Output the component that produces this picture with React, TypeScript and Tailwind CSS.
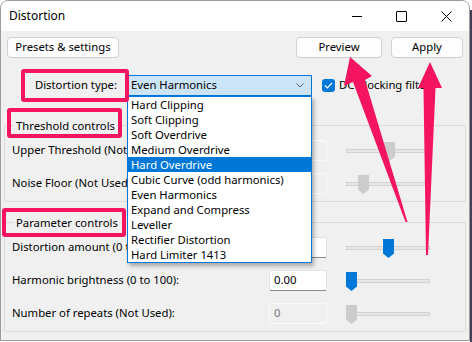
import React from 'react';

const options = [
  'Hard Clipping',
  'Soft Clipping',
  'Soft Overdrive',
  'Medium Overdrive',
  'Hard Overdrive',
  'Cubic Curve (odd harmonics)',
  'Even Harmonics',
  'Expand and Compress',
  'Leveller',
  'Rectifier Distortion',
  'Hard Limiter 1413',
];

const Slider: React.FC<{ pos: number; active?: boolean }> = ({ pos, active }) => (
  <div className="relative w-[84px] h-[21px] ml-[19px]">
    <div className="absolute left-0 right-0 top-[9px] h-[4px] bg-[#e6e6e6] border border-[#d2d2d2]" />
    <svg className="absolute top-[2px]" style={{ left: pos }} width="11" height="19" viewBox="0 0 11 19">
      <path d="M0 0H11V14.5L5.5 19L0 14.5Z" fill={active ? '#0078d7' : '#cccccc'} />
    </svg>
  </div>
);

const Row: React.FC<{ label: string; value?: string; enabled?: boolean; pos: number; first?: boolean }> = ({
  label,
  value = '',
  enabled,
  pos,
  first,
}) => (
  <div className={`flex items-center h-[21px] pl-[7px] ${first ? '' : 'mt-[12px]'}`}>
    <div className="w-[257px] whitespace-nowrap overflow-hidden">{label}</div>
    <div
      className={`w-[58px] h-[21px] flex items-center px-[4px] rounded-[2px] border ${
        enabled
          ? 'bg-white border-[#e3e3e3] border-b-[#8a8a8a] text-black'
          : 'bg-[#f0f0f0] border-[#fbfbfb] text-[#7a7a7a]'
      }`}
    >
      {value}
    </div>
    <Slider pos={pos} active={enabled} />
  </div>
);

const Group: React.FC<{ title: string; children: React.ReactNode; className?: string }> = ({ title, children, className }) => (
  <fieldset className={`mx-[3px] w-[462px] border border-[#dcdcdc] rounded-[2px] pb-[7px] ${className ?? ''}`}>
    <legend className="ml-[9px] px-[2px] leading-[16px] pt-[2px]">{title}</legend>
    <div className="pt-[6px]">{children}</div>
  </fieldset>
);

export default function App() {
  return (
    <div className="w-[472px] h-[342px] bg-white relative overflow-hidden text-[11.3px] text-black font-['Noto_Sans','Segoe_UI',sans-serif]">
      {/* desktop strip to the right of the window */}
      <div className="absolute right-0 top-[10px] bottom-0 w-[2px] bg-[#3f4257]" />
      <div className="w-[470px] h-[341px] bg-[#f0f0f0] border border-[#9c9c9c] rounded-t-[8px] overflow-hidden flex flex-col">
        {/* title bar */}
        <div className="h-[30px] bg-white flex items-center shrink-0 text-[12px]">
          <span className="ml-[8px] flex-1">Distortion</span>
          <div className="w-[45px] h-full flex items-center justify-center">
            <div className="w-[10px] h-px bg-black" />
          </div>
          <div className="w-[45px] h-full flex items-center justify-center">
            <div className="w-[11px] h-[11px] border border-black rounded-[1px]" />
          </div>
          <div className="w-[45px] h-full flex items-center justify-center">
            <svg width="11" height="11" viewBox="0 0 11 11">
              <path d="M0.5 0.5L10.5 10.5M10.5 0.5L0.5 10.5" stroke="#000" strokeWidth="1" />
            </svg>
          </div>
        </div>

        {/* buttons */}
        <div className="flex mt-[6px] px-[6px] h-[21px]">
          <button className="w-[112px] h-[21px] bg-[#fdfdfd] border border-[#d0d0d0] rounded-[4px]">Presets &amp; settings</button>
          <div className="flex-1" />
          <button className="w-[86px] h-[21px] bg-[#fdfdfd] border border-[#d0d0d0] rounded-[4px]">Preview</button>
          <button className="w-[72px] h-[21px] ml-[9px] bg-[#fdfdfd] border border-[#d0d0d0] rounded-[4px]">Apply</button>
        </div>

        {/* distortion type */}
        <div className="flex items-center mt-[17px] h-[21px]">
          <div className="w-[117px] text-right pr-[1px]">Distortion type:</div>
          <div className="ml-[7px] w-[187px] h-[21px] bg-[#cce4f7] border border-[#0078d7] flex items-center pl-[5px] pr-[7px]">
            <span className="flex-1">Even Harmonics</span>
            <svg width="8" height="5" viewBox="0 0 8 5">
              <path d="M0.5 0.5L4 4L7.5 0.5" stroke="#606060" fill="none" />
            </svg>
          </div>
          <div className="ml-[10px] w-[13px] h-[13px] rounded-[3px] bg-[#0078d7] flex items-center justify-center">
            <svg width="9" height="7" viewBox="0 0 9 7">
              <path d="M1 3.5L3.3 5.8L8 1" stroke="#fff" strokeWidth="1.2" fill="none" />
            </svg>
          </div>
          <span className="ml-[4px] whitespace-nowrap">DC blocking filter</span>
        </div>

        <Group title="Threshold controls" className="mt-[20px]">
          <Row first label="Upper Threshold (Not Used) (dB):" pos={38} />
          <Row label="Noise Floor (Not Used) (dB):" pos={12} />
        </Group>

        <Group title="Parameter controls" className="mt-[11px]">
          <Row first label="Distortion amount (0 to 100):" value="50.00" enabled pos={37} />
          <Row label="Harmonic brightness (0 to 100):" value="0.00" enabled pos={0} />
          <Row label="Number of repeats (Not Used):" value="0" pos={0} />
        </Group>
      </div>

      {/* open dropdown list */}
      <div className="absolute left-[127px] top-[96px] w-[185px] bg-white border border-[#0078d7] shadow-[2px_3px_4px_rgba(0,0,0,0.3)]">
        {options.map((o) => (
          <div
            key={o}
            className={`h-[15px] leading-[15px] pl-[3px] whitespace-nowrap ${o === 'Hard Overdrive' ? 'bg-[#0078d7] text-white' : ''}`}
          >
            {o}
          </div>
        ))}
      </div>

      {/* annotation boxes */}
      <div className="absolute left-[21px] top-[69px] w-[108px] h-[33px] border-[4px] border-[#f5145f] rounded-[3px]" />
      <div className="absolute left-[7px] top-[108px] w-[115px] h-[30px] border-[4px] border-[#f5145f] rounded-[3px]" />
      <div className="absolute left-[2px] top-[208px] w-[124px] h-[29px] border-[4px] border-[#f5145f] rounded-[3px]" />

      {/* annotation arrows */}
      <svg className="absolute inset-0 pointer-events-none" width="472" height="342" viewBox="0 0 472 342">
        <polygon points="350,57 372,76 365,80 407.5,222 405.5,222 353,82 344,86" fill="#f5145f" />
        <polygon points="430,62 442,88 435.5,88 428,255 426,255 423.5,88 418,88" fill="#f5145f" />
      </svg>
    </div>
  );
}
